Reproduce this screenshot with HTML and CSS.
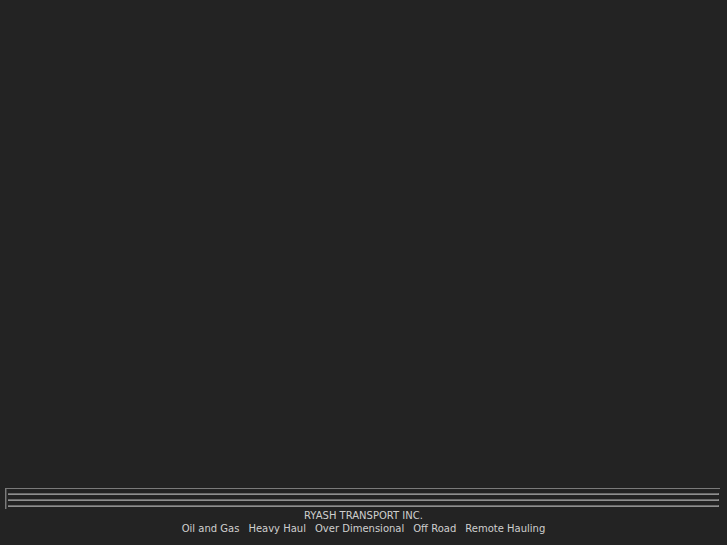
FILE: index.html
```html
<!DOCTYPE html>
<html lang="en">
<head>
    <meta charset="UTF-8">
    <title>Ryash Transport Inc.</title>
    <link rel="stylesheet" href="styles.css">
</head>
<body>
<div class="page">
    <div class="content"></div>
    <div class="footer">
        <div class="rule-box">
            <hr>
            <hr>
            <hr>
        </div>
        <div class="company">RYASH TRANSPORT INC.</div>
        <div class="links">
            <a href="#">Oil and Gas</a>
            <a href="#">Heavy Haul</a>
            <a href="#">Over Dimensional</a>
            <a href="#">Off Road</a>
            <a href="#">Remote Hauling</a>
        </div>
    </div>
</div>
</body>
</html>
```

FILE: styles.css
```css
html, body {
    margin: 0;
    height: 100%;
}
body {
    background-color: #232323;
    color: #cfcfcf;
    font-family: "DejaVu Sans", sans-serif;
    font-size: 10px;
}
.page {
    display: flex;
    flex-direction: column;
    height: 100%;
}
.content {
    flex: 1;
}
.footer {
    padding-bottom: 10px;
    text-align: center;
}
.rule-box {
    margin: 0 7px 0 5px;
    padding: 4px 1px 2px 2px;
    border-top: 1px solid #7a7a7a;
    border-left: 1px solid #7a7a7a;
    box-shadow: inset 1px 0 0 #4a4a4a;
}
hr {
    margin: 0 0 4px 0;
    height: 0;
    border: none;
    border-top: 1px solid #6a6a6a;
    border-bottom: 1px solid #8f8f8f;
    border-right: 1px solid #8f8f8f;
}
hr:last-child {
    margin-bottom: 0;
}
.company {
    line-height: 13px;
}
.links {
    display: flex;
    justify-content: center;
    gap: 9px;
    line-height: 13px;
}
.links a {
    color: #cfcfcf;
    text-decoration: none;
}
```
